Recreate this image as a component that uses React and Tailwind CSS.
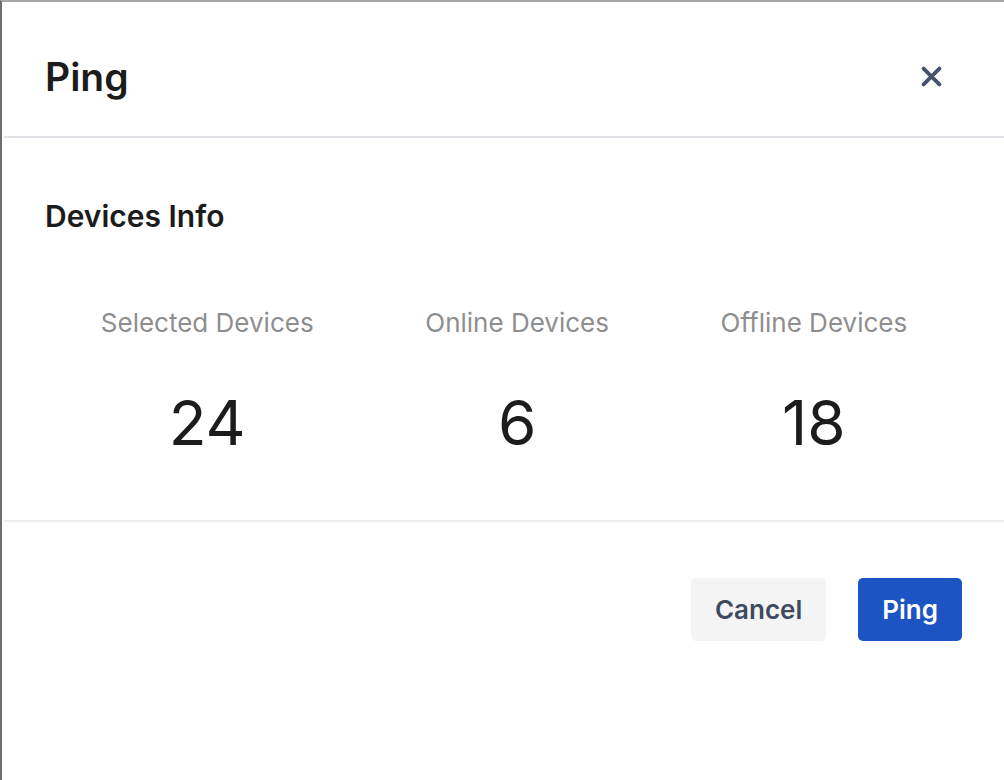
import React from "react";

const stats = [
  { label: "Selected Devices", value: 24 },
  { label: "Online Devices", value: 6 },
  { label: "Offline Devices", value: 18 },
];

export default function App() {
  return (
    <div
      className="h-[780px] w-full bg-white border-l-2 border-t-2 border-l-[#6e6e6e] border-t-[#a6a6a6] overflow-hidden"
      style={{ fontFamily: "Inter, 'Noto Sans', sans-serif" }}
    >
      <div className="ml-[2px]">
        {/* Header */}
        <div className="h-[136px] flex items-center justify-between pt-[14px] pl-[41px] pr-[62px] border-b-2 border-[#e1e4e8]">
          <h2 className="text-[39px] font-semibold text-[#1c1c1c] leading-none">Ping</h2>
          <button type="button" className="w-[22px] h-[22px] flex items-center justify-center text-[#44516b]">
            <svg width="21" height="21" viewBox="0 0 20 20" fill="none" stroke="currentColor" strokeWidth="3.6" strokeLinecap="round">
              <path d="M2.5 2.5 L17.5 17.5 M17.5 2.5 L2.5 17.5" />
            </svg>
          </button>
        </div>

        {/* Body */}
        <div className="pt-[60px] pb-[65px] px-[41px] border-b-2 border-[#ececec]">
          <h3 className="text-[30px] leading-[36px] font-semibold text-[#1c1c1c]">Devices Info</h3>
          <div className="mt-[71px] flex justify-around">
            {stats.map((s) => (
              <div key={s.label} className="flex flex-col items-center">
                <p className="text-[26px] leading-[36px] text-[#8e8e8e]">{s.label}</p>
                <p className="mt-[50px] text-[62px] leading-[64px] text-[#1c1c1c]">{s.value}</p>
              </div>
            ))}
          </div>
        </div>

        {/* Footer */}
        <div className="pt-[56px] pr-[42px] flex justify-end gap-[32px]">
          <button type="button" className="h-[63px] px-[24px] rounded-[5px] bg-[#f4f4f4] text-[26px] font-semibold text-[#3e4a5e]">
            Cancel
          </button>
          <button type="button" className="h-[63px] px-[24px] rounded-[5px] bg-[#1c54c4] text-[26px] font-semibold text-white">
            Ping
          </button>
        </div>
      </div>
    </div>
  );
}
